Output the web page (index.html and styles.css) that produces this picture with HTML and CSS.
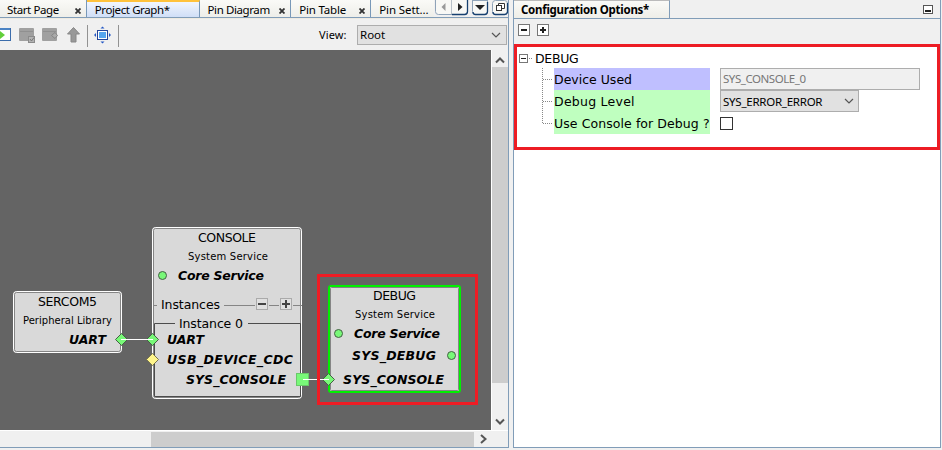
FILE: index.html
```
<!DOCTYPE html>
<html lang="en">
<head>
<meta charset="utf-8">
<title>Project Graph</title>
<link rel="stylesheet" href="styles.css">
</head>
<body>
<div class="app">
  <section class="graph-panel">
    <nav class="tabs">
      <div class="tab start"><span>Start Page</span><svg class="close" viewBox="0 0 6 6"><path d="M.5 .5L5.5 5.5M5.5 .5L.5 5.5"/></svg></div>
      <div class="tab active"><span>Project Graph*</span></div>
      <div class="tab diagram"><span>Pin Diagram</span><svg class="close" viewBox="0 0 6 6"><path d="M.5 .5L5.5 5.5M5.5 .5L.5 5.5"/></svg></div>
      <div class="tab table"><span>Pin Table</span><svg class="close" viewBox="0 0 6 6"><path d="M.5 .5L5.5 5.5M5.5 .5L.5 5.5"/></svg></div>
      <div class="tab settings"><span>Pin Sett...</span></div>
      <svg class="tab-controls" width="75" height="17" viewBox="0 0 75 17">
        <g fill="#f8f8f5" stroke="#8fa3b8"><path d="M2.500 -3V11.500Q2.500 14.500 5.500 14.500H31.500Q34.500 14.500 34.500 11.500V-3"/><path d="M39.500 -3V11.500Q39.500 14.500 42.500 14.500H51.500Q54.500 14.500 54.500 11.500V-3M39.500 .5H54.500"/><rect x="59.500" y=".5" width="15" height="14" rx="3"/></g>
        <path d="M18.500 0V14" stroke="#b8c0c8"/>
        <path d="M19 14.500H31.500Q34.500 14.500 34.500 11.500V0M40 12Q40 14.500 42.500 14.500H51.500Q54.500 14.500 54.500 11.500V2M60 12Q60 14.500 62.500 14.500H71.500Q74.500 14.500 74.500 11.500V3" fill="none" stroke="#17406f" stroke-width="1.300"/>
        <path d="M12.500 3V11L8.500 7Z" fill="#999"/><path d="M25 3V11L29.500 7Z" fill="#222"/><path d="M42 5H52L47 10Z" fill="#222"/>
        <g fill="#fff" stroke="#333"><path d="M65.500 6V3.500H71.500V8.500H69"/><rect x="63.500" y="5.500" width="5" height="5"/></g>
      </svg>
    </nav>
    <div class="toolbar">
      <svg class="tools" width="122" height="32" viewBox="0 0 122 32">
        <rect x="-3" y="9.500" width="13.500" height="12" fill="#fff" stroke="#3b6cab"/><path d="M0 10H10" stroke="#4b83c4" stroke-width="2"/><path d="M0 12L5 16L0 20Z" fill="#62cf3a"/>
        <rect x="19" y="9" width="15" height="13" rx="1" fill="#a0a0a0"/><path d="M20 12.500H33" stroke="#909090"/><rect x="28.500" y="17.500" width="6" height="6" fill="#b3b3b3" stroke="#8b8b8b"/><path d="M30 20L31.500 22L34 18.500" stroke="#777" fill="none"/>
        <rect x="42" y="9" width="15" height="13" rx="1" fill="#a0a0a0"/><path d="M43 12.500H56" stroke="#909090"/><path d="M55 13.500L51.500 16.500L55 19.500L57.500 16.500Z" fill="#aaa" stroke="#858585"/>
        <path d="M73.500 8.500L79.500 15H76V23H71V15H67.500Z" fill="#999" stroke="#878787"/>
        <path d="M87.500 6V28M118.500 6V28" stroke="#929292"/>
        <rect x="97.500" y="11.500" width="10" height="9" fill="#fff" stroke="#24459a"/><rect x="99" y="13" width="7" height="6" fill="#57a6ef"/>
        <path d="M102.500 7.500L104.500 9.500H100.500ZM102.500 24.500L104.500 22.500H100.500ZM94 16L96 14V18ZM111 16L109 14V18Z" fill="#2458c5"/>
      </svg>
      <label class="view">View:</label>
      <div class="select root"><span>Root</span><svg width="10" height="6" viewBox="0 0 10 6"><path d="M1 1L5 5L9 1"/></svg></div>
    </div>
    <div class="workspace">
      <svg class="canvas" width="491" height="380" viewBox="0 50 491 380">
        <g class="node">
          <rect x="13.500" y="291.500" width="108" height="61" rx="3"/><rect class="inner" x="14.500" y="292.500" width="106" height="59" rx="2"/>
          <rect x="152.500" y="227.500" width="149" height="171" rx="3"/><rect class="inner" x="153.500" y="228.500" width="147" height="169" rx="2"/>
          <rect class="selected" x="329" y="286" width="131" height="106" rx="2"/><rect class="inner" x="330.500" y="287.500" width="128" height="103" rx="1"/>
        </g>
        <path d="M153 305.500H157M224 305.500H255M269 305.500H279M293 305.500H302" class="divider"/>
        <path d="M175 323.500H154.500V396.500H300.500V323.500H248" class="instance"/>
        <g class="button"><rect x="256.500" y="298.500" width="11" height="11"/><rect x="280.500" y="298.500" width="11" height="11"/></g>
        <path d="M258 304H266M282 304H290M286 300V308" stroke="#444" stroke-width="2"/>
        <g class="port">
          <path d="M121.500 333.500L127.500 339.500L121.500 345.500L115.500 339.500Z"/><path d="M152.500 333.500L158.500 339.500L152.500 345.500L146.500 339.500Z"/>
          <path class="yellow" d="M152.500 353.500L158.500 359.500L152.500 365.500L146.500 359.500Z"/>
          <path d="M328.500 373.500L334.500 379.500L328.500 385.500L322.500 379.500Z"/><rect class="square" x="296.500" y="373.500" width="12" height="12"/>
          <circle cx="162.500" cy="275.500" r="4"/><circle cx="338.500" cy="333.500" r="4"/><circle cx="451.500" cy="355.500" r="4"/>
        </g>
        <path d="M121 339.500H153M303 379.500H329" stroke="#fff"/>
        <g class="title"><text x="38" y="306" textLength="59">SERCOM5</text><text x="198" y="242" textLength="58">CONSOLE</text><text x="373" y="300" textLength="43">DEBUG</text><text x="161" y="309" textLength="59">Instances</text><text x="179" y="328" textLength="64">Instance 0</text></g>
        <g class="subtitle"><text x="23" y="324" textLength="89">Peripheral Library</text><text x="188" y="260" textLength="80">System Service</text><text x="355" y="318" textLength="80">System Service</text></g>
        <g class="service"><text x="69" y="344" textLength="37">UART</text><text x="178" y="280" textLength="86">Core Service</text><text x="167" y="344" textLength="37">UART</text><text x="167" y="364" textLength="126">USB_DEVICE_CDC</text><text x="186" y="384" textLength="100">SYS_CONSOLE</text><text x="354" y="338" textLength="86">Core Service</text><text x="352" y="360" textLength="84">SYS_DEBUG</text><text x="343" y="384" textLength="101">SYS_CONSOLE</text></g>
        <rect x="318.500" y="275.500" width="158" height="128" class="highlight"/>
      </svg>
      <div class="vscroll"><svg width="10" height="7" viewBox="0 0 10 7"><path d="M1 5.500L5 1.500L9 5.500"/></svg><i></i><svg width="10" height="7" viewBox="0 0 10 7"><path d="M1 1.500L5 5.500L9 1.500"/></svg></div>
    </div>
    <div class="hscroll"><i></i><svg width="7" height="10" viewBox="0 0 7 10"><path d="M1 1L5.500 5L1 9"/></svg></div>
  </section>
  <section class="config-panel">
    <header><div class="config-tab"><span>Configuration Options*</span></div><svg width="10" height="9" viewBox="0 0 10 9"><rect x=".5" y=".5" width="9" height="8" fill="#fff" stroke="#555"/><path d="M2 6H8" stroke="#222" stroke-width="2"/></svg></header>
    <div class="config-tools"><svg width="31" height="12" viewBox="0 0 31 12"><g fill="#fff" stroke="#777"><rect x=".5" y=".5" width="11" height="11"/><rect x="19.500" y=".5" width="11" height="11"/></g><path d="M3 6H9M22 6H28M25 3V9" stroke="#222" stroke-width="2"/></svg></div>
    <div class="options">
      <div class="root-row"><svg width="14" height="9" viewBox="0 0 14 9"><rect x=".5" y=".5" width="8" height="8" fill="#fff" stroke="#777"/><path d="M2 4.500H7" stroke="#222"/><path d="M10 4.500H14" stroke="#888" stroke-dasharray="1 1"/></svg><span>DEBUG</span></div>
      <div class="tree">
        <svg class="branches" width="11" height="66" viewBox="0 0 11 66"><path d="M.5 0V56M1 11.500H11M1 33.500H11M1 55.500H11" stroke="#888" stroke-dasharray="1 1"/></svg>
        <div class="labels"><div class="blue"><span class="device">Device Used</span></div><div><span class="debug-level">Debug Level</span></div><div><span class="console">Use Console for Debug ?</span></div></div>
        <div class="fields"><div class="input"><span>SYS_CONSOLE_0</span></div><div class="select level"><span>SYS_ERROR_ERROR</span><svg width="10" height="6" viewBox="0 0 10 6"><path d="M1 1L5 5L9 1"/></svg></div><div class="check"></div></div>
      </div>
    </div>
  </section>
</div>
</body>
</html>
```
FILE: styles.css
```
* { box-sizing: border-box; }
body { margin: 0; background: #f0f0f0; color: #000; font: 12px "Noto Sans", sans-serif; overflow: hidden; }
svg { display: block; flex: none; }
span, label { white-space: nowrap; }
.app { width: 942px; height: 450px; display: flex; gap: 4px; }
.graph-panel { width: 509px; height: 448px; border-right: 1px solid #819db8; border-bottom: 1px solid #819db8; }
.tabs { height: 18px; display: flex; border-bottom: 1px solid #819db8; }
.tab { height: 17px; display: flex; align-items: center; justify-content: space-between; padding: 0 5px 0 8px; border-right: 1px solid #7898b8; background: linear-gradient(#fafaf7, #eeeee9); font-size: 11.5px; letter-spacing: -.4px; line-height: 17px; }
.tab span { position: relative; top: 1px; }
.start { width: 87px; padding-left: 7px; }
.active { width: 113px; background: linear-gradient(#f1f5fd, #d0dff7); border-top: 2px solid #ffc23b; }
.active span { margin-top: -2px; }
.diagram { width: 92px; }
.table { width: 80px; letter-spacing: -.2px; }
.settings { width: 63px; border: 0; padding-right: 0; letter-spacing: -.1px; }
.close { width: 6px; height: 6px; margin-top: 4px; stroke: #333; stroke-width: 1.8; }
.tab-controls { margin-left: -1px; }
.toolbar { height: 32px; display: flex; align-items: center; background: #f0f0f0; border-top: 1px solid #eeeae0; }
.view { margin-left: 197px; width: 38px; font-size: 11px; letter-spacing: .1px; }
.select { display: flex; align-items: center; justify-content: space-between; border: 1px solid #adadad; background: #e1e1e1; }
.select svg path { fill: none; stroke: #555; stroke-width: 1.2; }
.root { width: 150px; height: 20px; padding: 0 5px 0 2px; margin-top: 0; }
.root span { font-size: 11.5px; }
.workspace { height: 380px; display: flex; }
.canvas { background: #646464; }
.vscroll { width: 17px; border-left: 1px solid #fff; display: flex; flex-direction: column; align-items: center; padding-top: 7px; }
.vscroll i { width: 16px; height: 316px; background: #cdcdcd; margin: 3px 0 35px; }
.vscroll svg path, .hscroll svg path { fill: none; stroke: #555; stroke-width: 2; }
.hscroll { height: 17px; border-top: 1px solid #fff; display: flex; align-items: center; }
.hscroll i { width: 323px; height: 15px; background: #cdcdcd; margin: 0 6px 0 151px; }
.node rect { fill: #d9d9d9; stroke: #fff; }
.node .inner { fill: none; stroke: #858585; }
.node .selected { stroke: #00f000; stroke-width: 2; }
.divider { stroke: #858585; }
.instance { stroke: #4c4c4c; fill: none; }
.button rect { fill: #e0e0e0; stroke: #f4f4f4; outline: 1px solid #aaa; outline-offset: -1px; }
.port { fill: #78f878; stroke: #446044; }
.port .yellow { fill: #fff58b; stroke: #77734c; }
.port .square { stroke: #69c869; }
.title, .subtitle { font-family: "DejaVu Sans", sans-serif; }
.title { font-size: 12.5px; }
.subtitle { font-size: 10px; }
.service { font: italic bold 12.5px "DejaVu Sans", sans-serif; }
.highlight { fill: none; stroke: #ed1c24; stroke-width: 3; }
.config-panel { width: 428px; height: 448px; border: solid #819db8; border-width: 0 1px 1px; background: #fff; }
.config-panel header { height: 19px; display: flex; justify-content: space-between; border-bottom: 1px solid #819db8; padding-right: 7px; background: #f0f0f0; }
.config-panel header > svg { margin-top: 5px; }
.config-tab { width: 156px; height: 18px; padding-left: 7px; font: bold 11.5px/17px "Noto Sans", sans-serif; letter-spacing: -.27px; border-right: 1px solid #819db8; border-top: 1px solid #bbb; background: linear-gradient(#fafaf7, #eeeee8); }
.config-tools { height: 25px; padding: 5px 0 0 4px; background: #f0f0f0; }
.options { width: 426px; height: 106px; border: 3px solid #ed1c24; padding: 2px; }
.root-row { height: 19px; display: flex; align-items: center; gap: 2px; font: 12.5px "DejaVu Sans", sans-serif; letter-spacing: -.3px; }
.tree { display: flex; padding-left: 23px; }
.labels { width: 156px; margin-left: 1px; background: #bfffbf; }
.labels div { height: 22px; line-height: 23px; font-family: "DejaVu Sans", sans-serif; font-size: 12.5px; }
.labels .blue { background: #bfbfff; }
.debug-level { letter-spacing: .25px; }
.console { letter-spacing: .08px; }
.fields { margin-left: 10px; }
.input { width: 200px; height: 22px; border: 1px solid #adadad; background: #f0f0f0; color: #777; line-height: 20px; padding-left: 2px; font-size: 11.5px; letter-spacing: -.45px; }
.level { width: 139px; height: 22px; padding: 0 4px 0 2px; font-size: 11.5px; letter-spacing: -.25px; }
.check { width: 13px; height: 13px; margin-top: 5px; border: 1px solid #333; }
```
